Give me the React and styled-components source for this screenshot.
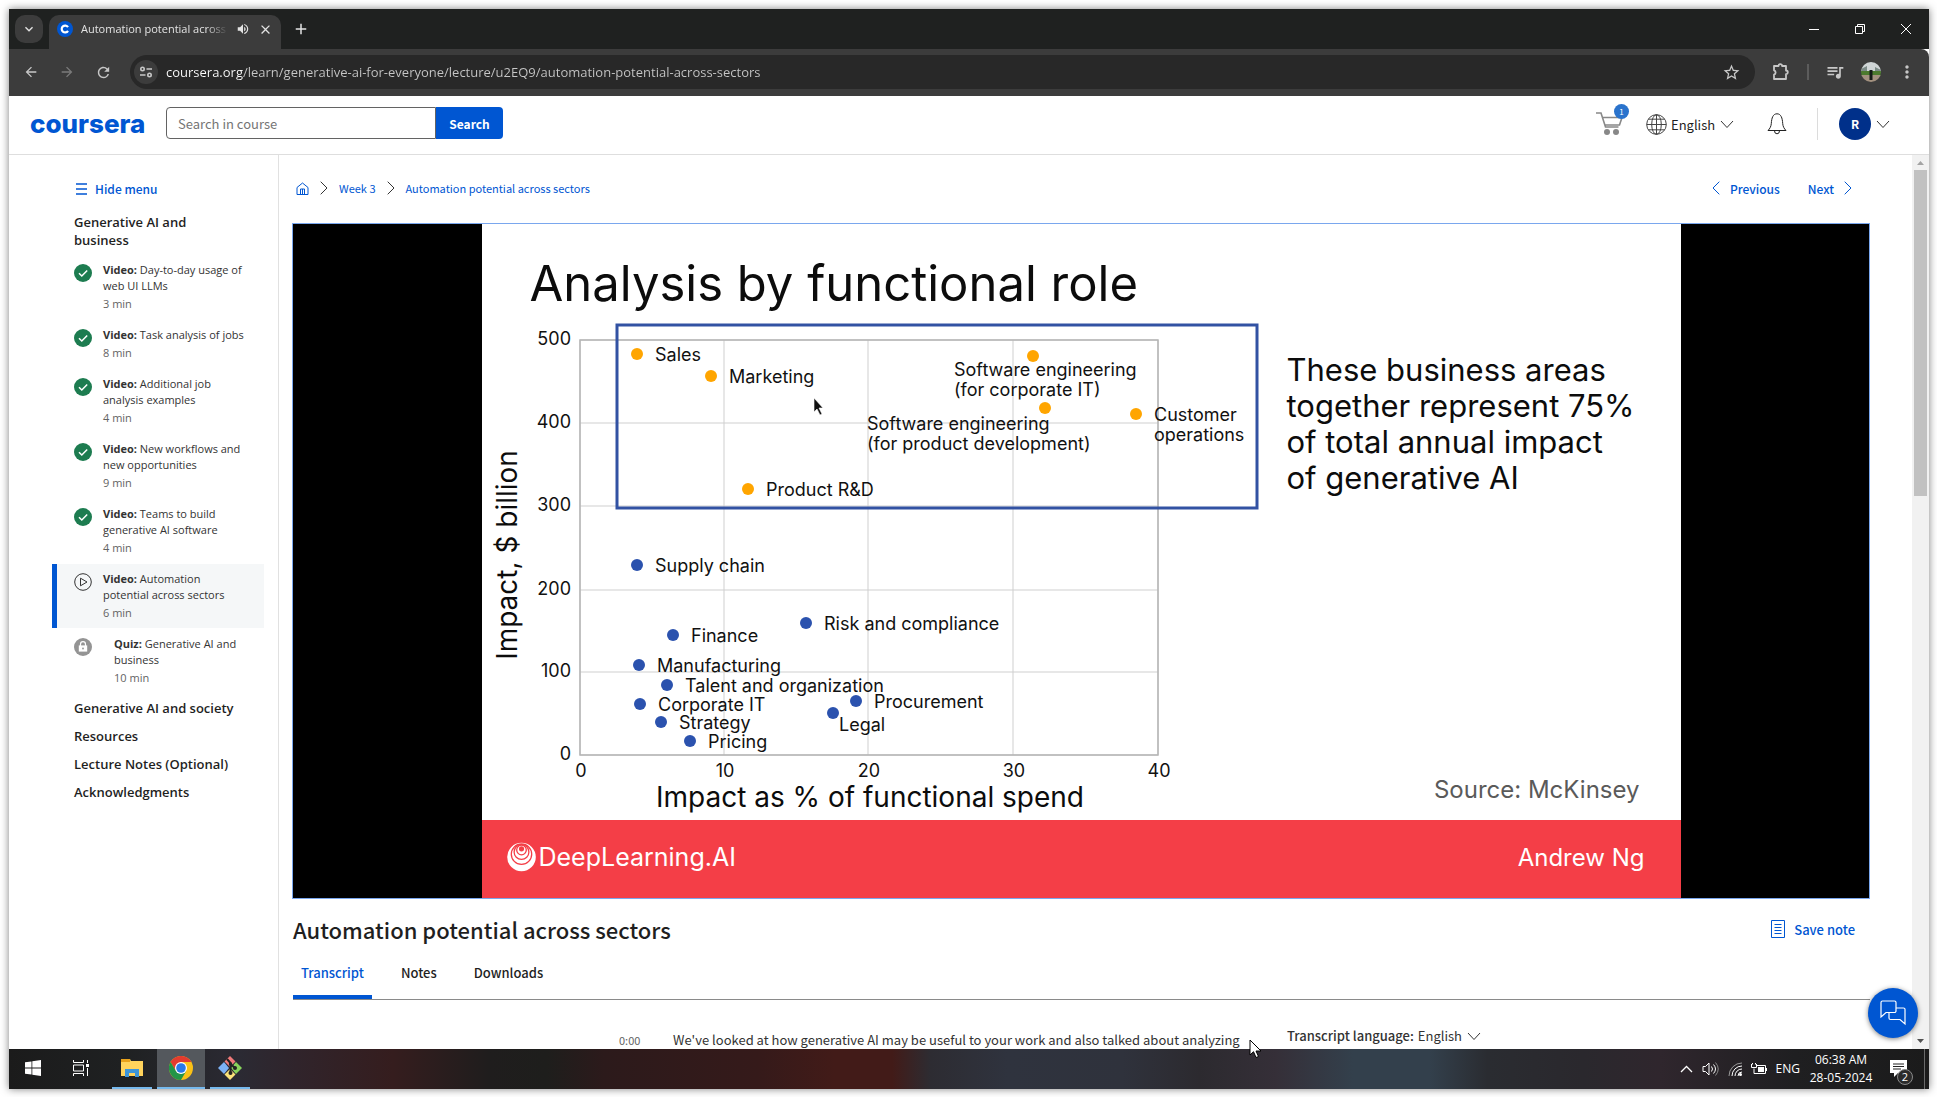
import React from "react";
import styled, { createGlobalStyle, css } from "styled-components";
import {
  MdArrowBack, MdArrowForward, MdRefresh, MdStarBorder,
  MdQueueMusic, MdMoreVert, MdVolumeUp, MdClose, MdAdd, MdKeyboardArrowDown,
} from "react-icons/md";

const ui = `"Noto Sans CJK SC", "Noto Sans", sans-serif`;
const humanist = `"Open Sans", "Noto Sans", sans-serif`;
const slideFont = `Inter, "Open Sans", sans-serif`;
const blue = "#0056d2";

const GlobalStyle = createGlobalStyle`
  *, *::before, *::after { box-sizing: border-box; }
  body { margin: 0; background: #fff; font-family: ${ui}; color: #1f1f1f; }
  button, input, select { font: inherit; color: inherit; margin: 0; padding: 0; border: 0; background: none; outline: none; }
  button { display: inline-flex; align-items: center; justify-content: center; cursor: pointer; }
  a { color: inherit; text-decoration: none; }
  h1, h2, h3, p, ul, ol { margin: 0; padding: 0; list-style: none; }
  svg { display: block; flex: none; }
`;

const Desktop = styled.div`
  height: 100vh;
  padding: 9px 8px 8px 9px;
  display: flex;
`;
const Screen = styled.div`
  position: relative;
  flex: 1;
  min-width: 0;
  display: flex;
  flex-direction: column;
  box-shadow: 0 0 8px rgba(0, 0, 0, 0.5);
  background: #fff;
`;

/* browser chrome */
const TabStrip = styled.div`
  height: 40px;
  flex: none;
  display: flex;
  align-items: flex-end;
  padding-left: 6px;
  background: #1f2120;
  color: #e3e3e3;
`;
const TabSearch = styled.button`
  width: 28px;
  height: 28px;
  margin: 0 6px 6px 0;
  border-radius: 10px;
  background: #3c3c3c;
`;
const Tab = styled.div`
  width: 232px;
  height: 34px;
  display: flex;
  align-items: center;
  gap: 8px;
  padding: 0 8px 6px;
  border-radius: 10px 10px 0 0;
  background: #3c3c3c;
  font: 11px/16px ${humanist};
`;
const TabTitle = styled.span`
  flex: 1;
  overflow: hidden;
  white-space: nowrap;
  mask-image: linear-gradient(90deg, #000 85%, transparent);
`;
const NewTab = styled.button`
  width: 28px;
  height: 28px;
  margin: 0 auto 6px 6px;
`;
const WindowButton = styled.button`
  width: 46px;
  height: 40px;
  color: #fff;
`;
const Toolbar = styled.div`
  height: 47px;
  flex: none;
  display: flex;
  align-items: center;
  padding: 0 4px 1px;
  border-radius: 0 8px 0 0;
  background: #3c3c3c;
  color: #c7c7c7;
`;
const ToolButton = styled.button`
  width: 36px;
  height: 34px;
  opacity: ${(p) => (p.$dim ? 0.45 : 1)};
`;
const Omnibox = styled.label`
  flex: 1;
  height: 34px;
  margin: 0 8px 0 9px;
  display: flex;
  align-items: center;
  gap: 8px;
  padding: 0 14px 0 4px;
  border-radius: 17px;
  background: #282828;
`;
const SiteInfo = styled.span`
  width: 24px;
  height: 24px;
  display: grid;
  place-items: center;
  border-radius: 50%;
  background: #3c3c3c;
`;
const Address = styled.input`
  flex: 1;
  font: 13px/20px ${humanist};
  color: transparent;
  background: linear-gradient(90deg, #fff 77px, #c7c7c7 77px);
  background-clip: text;
`;
const ToolDivider = styled.span`
  width: 2px;
  height: 16px;
  margin: 0 8px;
  background: #5c5c5c;
`;

/* site header */
const SiteHeader = styled.header`
  height: 59px;
  flex: none;
  display: flex;
  align-items: center;
  padding: 0 39px 2px 21px;
  border-bottom: 1px solid #dedede;
`;
const Logo = styled.a`
  width: 136px;
  color: ${blue};
  font: 800 26px/32px Inter, sans-serif;
`;
const SearchForm = styled.form`
  display: flex;
  margin: 0 auto 2px 0;
`;
const SearchInput = styled.input`
  width: 270px;
  height: 32px;
  padding: 0 11px;
  border: 1px solid #636363;
  border-radius: 4px 0 0 4px;
  font-size: 13px;
  &::placeholder { color: #757575; opacity: 1; }
`;
const SearchButton = styled.button`
  width: 67px;
  height: 32px;
  border-radius: 0 4px 4px 0;
  background: ${blue};
  color: #fff;
  font-size: 12px;
  font-weight: 700;
`;
const CartButton = styled.button`
  position: relative;
  width: 28px;
  height: 26px;
  margin-right: 22px;
`;
const CartBadge = styled.span`
  position: absolute;
  top: -7px;
  right: -5px;
  width: 15px;
  height: 15px;
  border-radius: 50%;
  background: #2a73cc;
  color: #fff;
  font-size: 8px;
  line-height: 15px;
`;
const Picker = styled.label`
  display: flex;
  align-items: center;
  gap: 4px;
  font-size: 13px;
  ${(p) => p.$strong && css`
    font-weight: 500;
    line-height: 20px;
  `}
`;
const PickerSelect = styled.select`
  appearance: none;
  font-weight: 400;
`;
const BellButton = styled.button`
  margin: 0 30px 0 33px;
`;
const HeaderDivider = styled.span`
  width: 1px;
  height: 32px;
  margin-right: 21px;
  background: #dcdcdc;
`;
const Account = styled.button`
  gap: 5px;
`;
const Avatar = styled.span`
  width: 32px;
  height: 32px;
  border-radius: 50%;
  background: #00308a;
  color: #fff;
  font-size: 12px;
  font-weight: 700;
  line-height: 32px;
`;

/* page body */
const Body = styled.div`
  flex: 1;
  min-height: 0;
  display: flex;
  overflow: hidden;
`;
const Sidebar = styled.nav`
  width: 270px;
  flex: none;
  padding: 23px 14px 0 43px;
  border-right: 1px solid #e1e1e1;
  font-family: ${humanist};
`;
const HideMenu = styled.button`
  gap: 8px;
  height: 20px;
  margin: 0 0 14px 24px;
  color: ${blue};
  font: 500 12px/20px ${ui};
`;
const Section = styled.h3`
  padding: 0 50px 6px 22px;
  font-size: 13px;
  font-weight: 600;
  line-height: 18px;
`;
const SectionLink = styled(Section)`
  padding: 5px 0 5px 22px;
`;
const Item = styled.a`
  display: grid;
  grid-template-columns: 18px 1fr;
  column-gap: ${(p) => (p.$locked ? 22 : 11)}px;
  margin-bottom: 1px;
  padding: 7px 18px 7px 22px;
  font-size: 11px;
  line-height: 16px;
  ${(p) => p.$active && css`
    padding-left: 17px;
    border-left: 5px solid ${blue};
    background: #f5f7f8;
  `}
`;
const ItemIcon = styled.span`
  padding-top: 2px;
`;
const ItemTitle = styled.p`
  color: #333;
`;
const Duration = styled.p`
  margin-top: 2px;
  color: #636363;
`;

const Main = styled.main`
  flex: 1;
  min-width: 0;
  padding: 22px 42px 0 13px;
`;
const TopBar = styled.div`
  height: 22px;
  margin-bottom: 24px;
  display: flex;
  align-items: center;
  justify-content: space-between;
  padding: 0 18px 0 4px;
  color: ${blue};
`;
const Crumbs = styled.nav`
  display: flex;
  align-items: center;
  gap: 11px;
  font-size: 11px;
`;
const Steps = styled.nav`
  display: flex;
  gap: 28px;
  font-size: 12px;
  font-weight: 500;
`;
const StepLink = styled.a`
  display: flex;
  align-items: center;
  gap: 10px;
`;

/* video */
const Player = styled.section`
  display: flex;
  justify-content: center;
  border: 1px solid #7aa7ee;
  background: #000;
`;
const Slide = styled.div`
  width: 1199px;
  display: flex;
  flex-direction: column;
  background: #fff;
  color: #0c0c0c;
  font-family: ${slideFont};
`;
const SlideTitle = styled.h2`
  padding: 32px 48px 0;
  font-size: 49px;
  font-weight: 400;
  line-height: 56px;
`;
const SlideBody = styled.div`
  display: flex;
  justify-content: space-between;
`;
const Chart = styled.svg`
  width: 788px;
  height: 508px;
  font-family: ${slideFont};
`;
const SlideAside = styled.div`
  flex: 1;
  display: flex;
  flex-direction: column;
  justify-content: space-between;
  padding: 40px 41px 12px 17px;
`;
const Takeaway = styled.p`
  font-size: 31px;
  line-height: 36px;
  white-space: nowrap;
`;
const Source = styled.p`
  align-self: flex-end;
  color: #5a5a5a;
  font-size: 24px;
  line-height: 36px;
`;
const SlideFooter = styled.div`
  height: 78px;
  display: flex;
  align-items: center;
  justify-content: space-between;
  padding: 0 36px 4px 25px;
  background: #f43e47;
  color: #fff;
  font-size: 24px;
`;
const Brand = styled.span`
  display: flex;
  align-items: center;
  gap: 3px;
  font-size: 25px;
`;

/* below the video */
const TitleRow = styled.div`
  display: flex;
  align-items: center;
  justify-content: space-between;
  padding: 13px 15px 0 1px;
`;
const LectureTitle = styled.h1`
  font-size: 22px;
  font-weight: 500;
  line-height: 34px;
`;
const SaveNote = styled.button`
  gap: 9px;
  color: ${blue};
  font-size: 13px;
  font-weight: 500;
`;
const TabList = styled.div`
  display: flex;
  gap: 21px;
  margin-left: 1px;
  padding-top: 8px;
  border-bottom: 1px solid #8a8a8a;
`;
const TabButton = styled.button`
  height: 45px;
  padding: 0 8px 5px;
  border-bottom: 4px solid ${(p) => (p.$active ? blue : "transparent")};
  border-radius: 2px 2px 0 0;
  color: ${(p) => (p.$active ? blue : "inherit")};
  font-size: 13px;
  font-weight: 500;
`;
const TranscriptRow = styled.div`
  display: flex;
  align-items: flex-start;
  padding: 26px 0 0 327px;
  font-size: 13px;
  line-height: 28px;
  white-space: nowrap;
  color: #333;
`;
const Timestamp = styled.span`
  width: 54px;
  color: #636363;
  font-size: 11px;
`;
const Caption = styled.p`
  width: 614px;
`;

const Scrollbar = styled.div`
  width: 17px;
  flex: none;
  display: flex;
  flex-direction: column;
  align-items: center;
  padding: 6px 0;
  background: #f1f1f1;
`;
const Thumb = styled.div`
  width: 13px;
  height: 37%;
  margin: 5px 0 auto;
  background: #c1c1c1;
`;
const ChatButton = styled.button`
  position: absolute;
  right: 11px;
  bottom: 51px;
  width: 50px;
  height: 50px;
  border-radius: 50%;
  background: ${blue};
  box-shadow: 0 1px 5px rgba(0, 0, 0, 0.5);
`;
const Pointer = styled.svg`
  position: absolute;
  left: 1240px;
  bottom: 30px;
`;

/* desktop taskbar */
const Taskbar = styled.footer`
  height: 40px;
  flex: none;
  display: flex;
  align-items: stretch;
  color: #fff;
  background: linear-gradient(90deg,
    #1b1b1b 0, #1f2122 6%, #2b2a33 12%, #30242b 15%, #351d1e 20%, #1f1d1d 25%, #1e1e1c 28%,
    #2c1a1b 31%, #351a1a 39%, #421b18 43%, #421b18 46%, #2d2c32 48%, #2f333e 52%, #2f323c 58%,
    #2c2a2f 62%, #352f38 66%, #33404c 70%, #33404c 74%, #2a2c31 77%, #2a282d 82%, #2f262d 86%,
    #1f1f21 93%, #1b1b1b);
  font: 12px/18px ${humanist};
`;
const TaskButton = styled.button`
  width: 48px;
  border-bottom: 2px solid transparent;
  ${(p) => p.$running && css`
    width: 40px;
    margin: 0 5px 0 0;
    border-color: #76b9ed;
  `}
  ${(p) => p.$active && css`
    width: 48px;
    background: #54585d;
  `}
`;
const Launchers = styled.div`
  display: flex;
  margin-right: 7px;
`;
const Tray = styled.div`
  display: flex;
  align-items: center;
  gap: 9px;
  margin-left: auto;
`;
const Clock = styled.div`
  width: 64px;
  text-align: center;
`;
const Notices = styled.button`
  position: relative;
  width: 33px;
  height: 40px;
`;
const NoticeCount = styled.span`
  position: absolute;
  right: 2px;
  bottom: 4px;
  width: 16px;
  height: 16px;
  border: 1px solid #8a8a8a;
  border-radius: 50%;
  background: #2b2b2b;
  font-size: 11px;
  line-height: 14px;
`;
const ShowDesktop = styled.button`
  width: 5px;
  height: 40px;
  border-left: 1px solid #6a6a6a;
`;

/* icons */
const Line = ({ w, h, color = "currentColor", sw = 1, children }) => (
  <svg width={w} height={h} viewBox={`0 0 ${w} ${h}`} fill="none" stroke={color} strokeWidth={sw} aria-hidden="true">{children}</svg>
);
const Chevron = ({ dir = "right", color = "#333" }) => dir === "down"
  ? <Line w={14} h={9} color={color}><path d="M1 1l6 6.5L13 1" /></Line>
  : <Line w={8} h={14} color={color}><path d={dir === "left" ? "M7.3.7L1 7l6.3 6.300" : "M.7.7L7 7 .7 13.300"} /></Line>;

const DoneIcon = () => (
  <svg width="18" height="18" viewBox="0 0 18 18" aria-hidden="true">
    <circle cx="9" cy="9" r="9" fill="#1d7c50" />
    <path d="M5 9.2l2.8 2.8L13.2 6.4" fill="none" stroke="#fff" strokeWidth="1.5" />
  </svg>
);
const PlayIcon = () => (
  <Line w={18} h={18} color="#333"><circle cx="9" cy="9" r="8.3" /><path d="M6.5 5.2v7.6L13 9z" /></Line>
);
const LockIcon = () => (
  <svg width="18" height="18" viewBox="0 0 18 18" aria-hidden="true">
    <circle cx="9" cy="9" r="9" fill="#949494" />
    <path d="M6.5 8V6.2a2.5 2.5 0 015 0V8" fill="none" stroke="#fff" strokeWidth="1.2" />
    <path d="M4.8 7.4h8.4v6.2H4.8z" fill="#fff" /><circle cx="9" cy="10.5" r=".9" fill="#949494" />
  </svg>
);

const items = [
  { kind: "Video", title: "Day-to-day usage of web UI LLMs", time: 3, icon: <DoneIcon /> },
  { kind: "Video", title: "Task analysis of jobs", time: 8, icon: <DoneIcon /> },
  { kind: "Video", title: "Additional job analysis examples", time: 4, icon: <DoneIcon /> },
  { kind: "Video", title: "New workflows and new opportunities", time: 9, icon: <DoneIcon /> },
  { kind: "Video", title: "Teams to build generative AI software", time: 4, icon: <DoneIcon /> },
  { kind: "Video", title: "Automation potential across sectors", time: 6, icon: <PlayIcon />, active: true },
  { kind: "Quiz", title: "Generative AI and business", time: 10, icon: <LockIcon />, locked: true },
];

const orange = "#ffa500";
const navy = "#2b52ae";
const points = [
  [637, 354, orange, ["Sales"]],
  [711, 376, orange, ["Marketing"]],
  [1033, 356, orange, ["Software engineering", "(for corporate IT)"], 954, 376],
  [1045, 408, orange, ["Software engineering", "(for product development)"], 867, 430],
  [1136, 414, orange, ["Customer", "operations"]],
  [748, 489, orange, ["Product R&D"]],
  [637, 565, navy, ["Supply chain"]],
  [806, 623, navy, ["Risk and compliance"]],
  [673, 635, navy, ["Finance"]],
  [639, 665, navy, ["Manufacturing"]],
  [667, 685, navy, ["Talent and organization"]],
  [640, 704, navy, ["Corporate IT"]],
  [661, 722, navy, ["Strategy"]],
  [690, 741, navy, ["Pricing"]],
  [856, 701, navy, ["Procurement"]],
  [833, 713, navy, ["Legal"], 839, 731],
];
const columns = [[580, "0"], [724, "10"], [868, "20"], [1013, "30"], [1158, "40"]];
const rows = [[340, "500"], [423, "400"], [506, "300"], [590, "200"], [672, "100"], [755, "0"]];

function ImpactChart() {
  return (
    <Chart viewBox="482 312 788 508" role="img" aria-label="Impact by functional role">
      <g stroke="#cfcfcf" strokeWidth="1">
        {columns.map(([x]) => <path key={x} d={`M${x} 340V755`} />)}
        {rows.map(([y]) => <path key={y} d={`M580 ${y}H1158`} />)}
      </g>
      <path d="M580 340H1158V755H580z" fill="none" stroke="#b5b5b5" strokeWidth="1.5" />
      <rect x="617" y="325" width="640" height="183" fill="none" stroke="#3252a3" strokeWidth="3" />
      <g fontSize="18" fill="#111">
        {rows.map(([y, t]) => <text key={y} x="571" y={y + 5} textAnchor="end">{t}</text>)}
        {columns.map(([x, t]) => <text key={x} x={x + 1} y="777" textAnchor="middle">{t}</text>)}
        {points.map(([x, y, , lines, lx = x + 18, ly = y + 7]) => lines.map((line, i) => (
          <text key={line + x} x={lx} y={ly + i * 20}>{line}</text>
        )))}
      </g>
      {points.map(([x, y, color]) => <circle key={`${x}-${y}`} cx={x} cy={y} r="6" fill={color} />)}
      <g fontSize="28" fill="#0c0c0c" textAnchor="middle">
        <text x="870" y="807">Impact as % of functional spend</text>
        <text transform="translate(517 555) rotate(-90)">Impact, $ billion</text>
      </g>
      <path d="M814 398v14l3-3 3 6 2-1-3-6h4z" fill="#111" stroke="#fff" strokeWidth="0.6" />
    </Chart>
  );
}

const BrandMark = () => (
  <svg width="29" height="30" viewBox="0 0 29 30" aria-hidden="true">
    <circle cx="14.5" cy="15" r="14.3" fill="#fff" />
    <g fill="none" stroke="#f43e47" strokeWidth="1.3">
      <circle cx="14.5" cy="12.2" r="10.2" />
      <circle cx="14.5" cy="10" r="7.4" />
      <circle cx="14.5" cy="8" r="4.8" />
    </g>
    <circle cx="14.5" cy="6.8" r="2.6" fill="#f43e47" />
  </svg>
);

function BrowserChrome() {
  return (
    <>
      <TabStrip>
        <TabSearch aria-label="Search tabs"><MdKeyboardArrowDown size={16} /></TabSearch>
        <Tab>
          <svg width="16" height="16" viewBox="0 0 16 16" aria-hidden="true">
            <circle cx="8" cy="8" r="8" fill={blue} />
            <path d="M11 6.2A3.4 3.4 0 1 0 11 9.8" fill="none" stroke="#fff" strokeWidth="2.2" />
          </svg>
          <TabTitle>Automation potential across sectors</TabTitle>
          <MdVolumeUp size={14} />
          <MdClose size={15} />
        </Tab>
        <NewTab aria-label="New tab"><MdAdd size={18} /></NewTab>
        <WindowButton aria-label="Minimize"><Line w={10} h={10}><path d="M0 5.5h10" /></Line></WindowButton>
        <WindowButton aria-label="Restore"><Line w={10} h={10}><path d="M.5 2.5h7v7h-7zM2.5 2.5v-2h7v7h-2" /></Line></WindowButton>
        <WindowButton aria-label="Close"><Line w={10} h={10}><path d="M0 0l10 10M10 0L0 10" /></Line></WindowButton>
      </TabStrip>
      <Toolbar>
        <ToolButton aria-label="Back"><MdArrowBack size={16} /></ToolButton>
        <ToolButton aria-label="Forward" $dim><MdArrowForward size={16} /></ToolButton>
        <ToolButton aria-label="Reload"><MdRefresh size={17} /></ToolButton>
        <Omnibox>
          <SiteInfo>
            <Line w={14} h={14} sw={1.6}><circle cx="3.5" cy="4" r="1.7" /><path d="M7.5 4H13M1 10h5.5" /><circle cx="10.5" cy="10" r="1.7" /></Line>
          </SiteInfo>
          <Address aria-label="Address" defaultValue="coursera.org/learn/generative-ai-for-everyone/lecture/u2EQ9/automation-potential-across-sectors" />
          <MdStarBorder size={19} />
        </Omnibox>
        <ToolButton aria-label="Extensions">
          <Line w={18} h={18} sw={1.8}>
            <path d="M2 3h4.500a1.800 1.800 0 013.600 0H14v4.500a1.800 1.800 0 010 3.600V16H2v-4.300a2.300 2.300 0 000-4.400z" strokeLinejoin="round" />
          </Line>
        </ToolButton>
        <ToolDivider />
        <ToolButton aria-label="Media"><MdQueueMusic size={20} /></ToolButton>
        <ToolButton aria-label="Profile">
          <svg width="20" height="20" viewBox="0 0 20 20" aria-hidden="true">
            <clipPath id="profile"><circle cx="10" cy="10" r="10" /></clipPath>
            <g clipPath="url(#profile)">
              <path d="M0 0h20v10H0z" fill="#cfd5d6" /><path d="M0 7l6-3v6H0zM14 5l6 3v3h-6z" fill="#7b8a86" />
              <path d="M0 9h20v5H0z" fill="#4c7a2e" /><path d="M0 13h20v7H0z" fill="#a3917f" />
              <path d="M8.5 8h3v10h-3z" fill="#151a18" />
            </g>
          </svg>
        </ToolButton>
        <ToolButton aria-label="Menu"><MdMoreVert size={20} /></ToolButton>
      </Toolbar>
    </>
  );
}

function Header() {
  return (
    <SiteHeader>
      <Logo href="#">coursera</Logo>
      <SearchForm>
        <SearchInput aria-label="Search in course" placeholder="Search in course" />
        <SearchButton type="button">Search</SearchButton>
      </SearchForm>
      <CartButton aria-label="Cart">
        <svg width="28" height="26" viewBox="0 0 28 26" fill="none" stroke="#888" strokeWidth="1.6" aria-hidden="true">
          <path d="M0 2h5l4.5 14h13M6.5 6.5H26L23.5 14H9" />
          <g fill="#888" stroke="none"><circle cx="11" cy="21" r="3" /><circle cx="20" cy="21" r="3" /></g>
        </svg>
        <CartBadge>1</CartBadge>
      </CartButton>
      <Picker>
        <Line w={21} h={21} color="#444">
          <circle cx="10.5" cy="10.5" r="9.8" /><ellipse cx="10.5" cy="10.5" rx="4.8" ry="9.8" />
          <path d="M10.5.7v19.6M.7 10.5h19.6M2.5 5.200h16M2.500 15.800h16" />
        </Line>
        <PickerSelect aria-label="Language"><option>English</option></PickerSelect>
        <Chevron dir="down" />
      </Picker>
      <BellButton aria-label="Notifications">
        <Line w={20} h={22} color="#222">
          <path d="M1 17.500h18c-2-2-3-4-3.300-7C15.400 5 14 .8 10 .8S4.600 5 4.300 10.500C4 13.500 3 15.500 1 17.500zM7.500 17.800a2.500 3 0 005 0" />
        </Line>
      </BellButton>
      <HeaderDivider />
      <Account><Avatar>R</Avatar><Chevron dir="down" /></Account>
    </SiteHeader>
  );
}

function CourseMenu() {
  return (
    <Sidebar>
      <HideMenu>
        <Line w={11} h={12} sw={1.5}><path d="M0 1h11M0 6h11M0 11h11" /></Line>
        Hide menu
      </HideMenu>
      <Section>Generative AI and business</Section>
      {items.map((item) => (
        <Item key={item.title} href="#" $active={item.active} $locked={item.locked}>
          <ItemIcon>{item.icon}</ItemIcon>
          <div>
            <ItemTitle><b>{item.kind}:</b> {item.title}</ItemTitle>
            <Duration>{item.time} min</Duration>
          </div>
        </Item>
      ))}
      {["Generative AI and society", "Resources", "Lecture Notes (Optional)", "Acknowledgments"].map((name) => (
        <SectionLink key={name}>{name}</SectionLink>
      ))}
    </Sidebar>
  );
}

function Lecture() {
  return (
    <Main>
      <TopBar>
        <Crumbs>
          <Line w={13} h={13} color={blue}><path d="M1 5.500L6.500 1 12 5.500v7H1zM4.500 12.500V7h4v5.500M6.500 7v5.500" /></Line>
          <Chevron /><a href="#">Week 3</a><Chevron /><a href="#">Automation potential across sectors</a>
        </Crumbs>
        <Steps>
          <StepLink href="#"><Chevron dir="left" color={blue} />Previous</StepLink>
          <StepLink href="#">Next<Chevron color={blue} /></StepLink>
        </Steps>
      </TopBar>
      <Player>
        <Slide>
          <SlideTitle>Analysis by functional role</SlideTitle>
          <SlideBody>
            <ImpactChart />
            <SlideAside>
              <Takeaway>These business areas<br />together represent 75%<br />of total annual impact<br />of generative AI</Takeaway>
              <Source>Source: McKinsey</Source>
            </SlideAside>
          </SlideBody>
          <SlideFooter>
            <Brand><BrandMark />DeepLearning.AI</Brand>
            <span>Andrew Ng</span>
          </SlideFooter>
        </Slide>
      </Player>
      <TitleRow>
        <LectureTitle>Automation potential across sectors</LectureTitle>
        <SaveNote>
          <Line w={14} h={18} color={blue}><path d="M.5.5h13v17H.5zM3.500 4.500h7M3.500 7.500h7M3.500 10.500h7M3.500 13.500h7" /></Line>
          Save note
        </SaveNote>
      </TitleRow>
      <TabList role="tablist">
        <TabButton role="tab" aria-selected="true" $active>Transcript</TabButton>
        <TabButton role="tab">Notes</TabButton>
        <TabButton role="tab">Downloads</TabButton>
      </TabList>
      <TranscriptRow>
        <Timestamp>0:00</Timestamp>
        <Caption>We've looked at how generative AI may be useful to your work and also talked about analyzing</Caption>
        <Picker $strong>
          Transcript language:
          <PickerSelect><option>English</option></PickerSelect>
          <Chevron dir="down" />
        </Picker>
      </TranscriptRow>
    </Main>
  );
}

function DesktopBar() {
  return (
    <Taskbar>
      <Launchers>
        <TaskButton aria-label="Start">
          <svg width="16" height="16" viewBox="0 0 16 16" fill="#fff" aria-hidden="true">
            <path d="M0 2.300L6.500 1.400v6.200H0zM7.300 1.300L16 0v7.600H7.300zM0 8.400h6.500v6.200L0 13.700zM7.300 8.400H16V16l-8.700-1.300z" />
          </svg>
        </TaskButton>
        <TaskButton aria-label="Task view">
          <Line w={17} h={16}><path d="M.5 0v2.500h10V0M.5 16v-2.500h10V16M.5 5h10v6H.5zM14.500 0v3M14.500 8v8" /><path d="M13 4h3v3h-3z" fill="#fff" stroke="none" /></Line>
        </TaskButton>
      </Launchers>
      <TaskButton aria-label="File Explorer" $running>
        <svg width="22" height="20" viewBox="0 0 22 20" aria-hidden="true">
          <path d="M0 1h9l1 2h12v15H0z" fill="#ffd35c" /><path d="M0 1h9v3H0z" fill="#e8a21c" />
          <path d="M4 11h14v8h-4v-4H8v4H4z" fill="#3d95d8" />
        </svg>
      </TaskButton>
      <TaskButton aria-label="Chrome" $running $active>
        <svg width="24" height="24" viewBox="0 0 24 24" aria-hidden="true">
          <circle cx="12" cy="12" r="12" fill="#fbc116" />
          <path d="M12 6h10.400A12 12 0 001.600 6L7 15z" fill="#e33b2e" />
          <path d="M1.600 6A12 12 0 0012 24l5.200-9L12 17.500 7 15z" fill="#229547" />
          <circle cx="12" cy="12" r="6" fill="#fff" /><circle cx="12" cy="12" r="4.800" fill="#2a79e8" />
        </svg>
      </TaskButton>
      <TaskButton aria-label="Git" $running>
        <svg width="24" height="24" viewBox="0 0 24 24" aria-hidden="true">
          <path d="M12 0l5.500 5.500L12 11 6.500 5.500z" fill="#f07a7a" /><path d="M6 6l5 6-5 6-6-6z" fill="#7db2f5" />
          <path d="M18 6l6 6-6 6-5-6z" fill="#88d35c" /><path d="M12 13l5.500 5.500L12 24l-5.500-5.500z" fill="#fbe27a" />
          <path d="M9 3l3.500 4v11M12.500 8l4.500 4" fill="none" stroke="#222" strokeWidth="2" />
          <circle cx="12.500" cy="17" r="2" fill="#222" /><circle cx="17" cy="12" r="2" fill="#222" /><circle cx="12.500" cy="8" r="1.700" fill="#222" />
        </svg>
      </TaskButton>
      <Tray>
        <Line w={13} h={8} sw={1.3}><path d="M1 7l5.500-5.500L12 7" /></Line>
        <Line w={17} h={16}><path d="M1 5.500h2.500L7 2v12l-3.500-3.500H1z" /><path d="M9.500 5.500q2 2.500 0 5M11.500 3.500q4 4.500 0 9" /><path d="M13.500 1.500q5.500 6.500 0 13" stroke="#888" /></Line>
        <Line w={14} h={14}><path d="M1 14A13 13 0 0114 1" stroke="#999" /><path d="M4 14A10 10 0 0114 4M7 14a7 7 0 017-7M10 14a4 4 0 014-4" /><circle cx="12.500" cy="12.500" r="1.500" fill="#fff" stroke="none" /></Line>
        <Line w={16} h={12}><path d="M5.500 2.500h9v8h-9M15.500 5v3M3 5.500v5h3" /><path d="M.5 1v3.500h5V1M1.500 0v1.500M4.500 0v1.500" /><path d="M7 4h6v5H7z" fill="#fff" stroke="none" /></Line>
        <span>ENG</span>
        <Clock>06:38 AM<br />28-05-2024</Clock>
        <Notices aria-label="Notifications">
          <svg width="17" height="18" viewBox="0 0 17 18" aria-hidden="true">
            <path d="M0 0h17v13h-9l-4 4v-4H0z" fill="#fff" /><path d="M3 4h11M3 6.500h11M3 9h8" stroke="#222" />
          </svg>
          <NoticeCount>2</NoticeCount>
        </Notices>
        <ShowDesktop aria-label="Show desktop" />
      </Tray>
    </Taskbar>
  );
}

export default function App() {
  return (
    <Desktop>
      <GlobalStyle />
      <Screen>
        <BrowserChrome />
        <Header />
        <Body>
          <CourseMenu />
          <Lecture />
          <Scrollbar>
            <svg width="7" height="4" viewBox="0 0 7 4" aria-hidden="true"><path d="M3.500 0L7 4H0z" fill="#a3a3a3" /></svg>
            <Thumb />
            <svg width="7" height="4" viewBox="0 0 7 4" aria-hidden="true"><path d="M3.500 4L7 0H0z" fill="#505050" /></svg>
          </Scrollbar>
        </Body>
        <DesktopBar />
        <ChatButton aria-label="Chat">
          <Line w={26} h={26} color="#fff" sw={1.2}>
            <path d="M2.500 1h12a1.500 1.500 0 011.500 1.500v8.500a1.500 1.500 0 01-1.500 1.500H6L1 17V2.500A1.500 1.500 0 012.500 1z" />
            <path d="M16 8h7.500A1.500 1.500 0 0125 9.500V24l-5-4.500h-9.500A1.500 1.500 0 019 18v-5.500" />
          </Line>
        </ChatButton>
        <Pointer width="13" height="20" viewBox="0 0 13 20" aria-hidden="true">
          <path d="M1 1v15l3.500-3.300L7 18.500l2.500-1L7 12h5z" fill="#fff" stroke="#000" />
        </Pointer>
      </Screen>
    </Desktop>
  );
}
